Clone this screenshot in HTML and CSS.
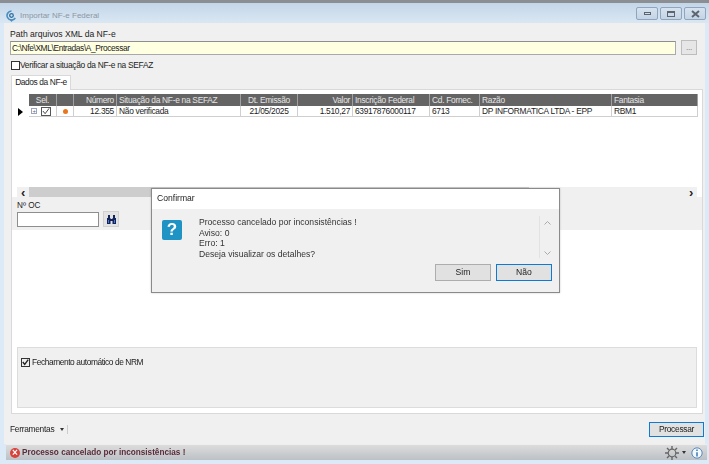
FILE: index.html
```html
<!DOCTYPE html>
<html lang="pt-BR">
<head>
<meta charset="utf-8">
<title>Importar NF-e Federal</title>
<link rel="stylesheet" href="styles.css">
</head>
<body>
<div class="window">
  <header class="titlebar">
    <svg class="app-icon" width="11" height="12" viewBox="0 0 11 12"><path d="M5.500 1a4.500 4.500 0 1 0 3.800 7" fill="none" stroke="#4a8fc0" stroke-width="1.600"/><circle cx="5.500" cy="5.500" r="1.800" fill="none" stroke="#2f6f9f" stroke-width="1.300"/><path d="M5.500 12l2-2.500h-4z" fill="#4a8fc0"/></svg>
    <span class="title">Importar NF-e Federal</span>
    <div class="controls">
      <span class="ctl"><i class="g-min"></i></span>
      <span class="ctl"><i class="g-max"></i></span>
      <span class="ctl"><svg width="9" height="8" viewBox="0 0 9 8"><path d="M1 1l7 6M8 1L1 7" stroke="#5c6470" stroke-width="2"/></svg></span>
    </div>
  </header>
  <main class="client">
    <label class="lbl-path">Path arquivos XML da NF-e</label>
    <div class="path-row">
      <div class="path-input">C:\Nfe\XML\Entradas\A_Processar</div>
      <button class="dots">...</button>
    </div>
    <div class="verify"><span class="cb"></span>Verificar a situação da NF-e na SEFAZ</div>
    <div class="tabs"><span class="tab">Dados da NF-e</span></div>
    <section class="panel">
      <div class="grid-box">
        <div class="grid">
          <div class="corner"></div>
          <div class="th c">Sel.</div><div class="th"></div><div class="th r">Número</div><div class="th">Situação da NF-e na SEFAZ</div><div class="th c">Dt. Emissão</div><div class="th r">Valor</div><div class="th">Inscrição Federal</div><div class="th">Cd. Fornec.</div><div class="th">Razão</div><div class="th">Fantasia</div>
          <div class="ind"><svg width="5" height="8" viewBox="0 0 5 8"><path d="M0 0l5 4-5 4z" fill="#000"/></svg></div>
          <div class="td sel"><span class="plus">+</span><span class="cb2"><svg width="9" height="8" viewBox="0 0 9 8"><path d="M1 4l2.500 3L8 1" fill="none" stroke="#333" stroke-width="1"/></svg></span></div>
          <div class="td c"><span class="dot"></span></div>
          <div class="td r">12.355</div><div class="td">Não verificada</div><div class="td c">21/05/2025</div><div class="td r">1.510,27</div><div class="td">63917876000117</div><div class="td">6713</div><div class="td">DP INFORMATICA LTDA - EPP</div><div class="td">RBM1</div>
        </div>
        <div class="hscroll">
          <span class="arrow">‹</span><span class="thumb"></span><span class="arrow">›</span>
        </div>
      </div>
      <div class="oc">
        <label>Nº OC</label>
        <div class="oc-row">
          <div class="oc-input"></div>
          <button class="bino"><svg width="11" height="11" viewBox="0 0 11 11"><path d="M1 4h3.500v6H1zM6.500 4H10v6H6.500zM2 1h2v3H2zM7 1h2v3H7zM4 5h3v2H4z" fill="#14235c"/><path d="M2 6h1v3H2zM8 6h1v3H8z" fill="#3f7fd0"/></svg></button>
        </div>
      </div>
      <div class="white-area"></div>
      <div class="group"><div class="auto"><span class="cb3"><svg width="9" height="8" viewBox="0 0 9 8"><path d="M1 4l2.500 3L8 1" fill="none" stroke="#222" stroke-width="1.800"/></svg></span>Fechamento automático de NRM</div></div>
    </section>
    <div class="tools">
      <span class="ferr">Ferramentas</span><span class="caret"></span><span class="sep"></span>
      <button class="proc">Processar</button>
    </div>
  </main>
  <footer class="status">
    <span class="err">×</span>
    <span class="msg">Processo cancelado por inconsistências !</span>
    <svg class="gear" width="14" height="14" viewBox="0 0 14 14"><circle cx="7" cy="7" r="3.800" fill="none" stroke="#666" stroke-width="1.200"/><path d="M7 0v3M7 11v3M0 7h3M11 7h3M2 2l2 2M10 10l2 2M12 2l-2 2M4 10l-2 2" stroke="#666" stroke-width="1.400"/></svg>
    <span class="caret dark"></span>
    <svg class="info" width="12" height="12" viewBox="0 0 14 14"><circle cx="7" cy="7" r="6" fill="#f4f8fc" stroke="#3a78b8"/><path d="M7 6v5M7 3v1.600" stroke="#2c6cb0" stroke-width="1.600"/></svg>
  </footer>
</div>
<div class="dialog">
  <div class="d-title">Confirmar</div>
  <div class="d-body">
    <div class="d-content">
      <span class="qmark">?</span>
      <div class="d-text">Processo cancelado por inconsistências !<br>Aviso: 0<br>Erro: 1<br>Deseja visualizar os detalhes?</div>
      <div class="d-scroll"><svg width="7" height="4" viewBox="0 0 7 4"><path d="M.5 3.500l3-3 3 3" fill="none" stroke="#aaa"/></svg><svg width="7" height="4" viewBox="0 0 7 4"><path d="M.5.500l3 3 3-3" fill="none" stroke="#aaa"/></svg></div>
    </div>
    <div class="d-btns"><button class="btn">Sim</button><button class="btn def">Não</button></div>
  </div>
</div>
</body>
</html>
```
FILE: styles.css
```css
* { box-sizing: border-box; }
html, body { margin: 0; height: 464px; width: 709px; overflow: hidden; }
body { position: relative; font: 8.4px/11px "Liberation Sans", Arial, sans-serif; letter-spacing: -.29px; color: #1c1c1c; background: #dce9f6; }
button { font: inherit; letter-spacing: inherit; color: inherit; padding: 0; }
.window { height: 464px; display: flex; flex-direction: column; border-top: 3px solid #8b8f94; filter: blur(.35px); }
.titlebar { height: 20px; flex: none; display: flex; align-items: center; padding: 5px 3px 0 6px; background: linear-gradient(#c3d6e8, #dae7f3); }
.app-icon { flex: none; }
.title { margin-left: 3px; color: #8b97a3; font-size: 8px; letter-spacing: 0; }
.controls { margin-left: auto; display: flex; gap: 2px; margin-top: -4px; }
.ctl { width: 22px; height: 13px; border: 1px solid #8fa4bd; border-radius: 2px; background: linear-gradient(#d6e2ef, #c4d4e5); display: flex; align-items: center; justify-content: center; }
.g-min { width: 7px; height: 3px; border: 1px solid #5c6470; }
.g-max { width: 8px; height: 6px; border: 1px solid #5c6470; border-top-width: 2px; }
.client { flex: 1; margin: 0 4px; background: #f0f0f0; padding: 6px 0 0 6px; display: flex; flex-direction: column; min-height: 0; }
.lbl-path { display: block; height: 11px; font-size: 8.6px; letter-spacing: 0; }
.path-row { display: flex; align-items: center; gap: 5px; height: 15px; padding-right: 8px; }
.path-input { flex: 1; height: 14px; border: 1px solid #a9a9a9; border-top-color: #8e8e8e; background: #ffffe1; line-height: 12px; padding-left: 1px; letter-spacing: -.38px; }
.dots { width: 16px; height: 15px; background: #e6e6e6; border: 1px solid #bdbdbd; color: #888; line-height: 9px; }
.verify { display: flex; align-items: center; margin: 5px 0 0 1px; height: 10px; }
.cb { width: 9px; height: 9px; border: 1px solid #333; background: #fff; margin-right: 0; }
.tabs { margin-top: 5px; height: 15px; display: flex; position: relative; z-index: 1; padding-left: 1px; }
.tab { width: 60px; height: 15px; background: #fff; border: 1px solid #d9d9d9; border-bottom: 0; text-align: center; line-height: 13px; letter-spacing: -.4px; }
.panel { width: 692px; margin-left: 1px; height: 325px; margin-top: -1px; background: #fff; border: 1px solid #d9d9d9; padding: 4px 5px 0; display: flex; flex-direction: column; flex: none; }
.grid-box { height: 103px; flex: none; display: flex; flex-direction: column; background: #f7f7f7; }
.grid { display: grid; grid-template-columns: 12px 28px 17px 43px 124px 57px 55px 77px 50px 132px 86px; grid-template-rows: 12px 11px; background: #fff; flex: 1; align-content: start; }
.corner { background: #fff; }
.th { background: #646464; color: #e4e4e4; padding: 0 2px; border-right: 1px solid #a0a0a0; white-space: nowrap; height: 12px; line-height: 12px; }
.td { height: 11px; background: #fff; padding: 0 2px; border-right: 1px solid #cfcfcf; border-bottom: 1px solid #cfcfcf; white-space: nowrap; line-height: 10px; }
.c { text-align: center; }
.r { text-align: right; }
.ind { display: flex; align-items: center; padding-left: 1px; background: #fff; }
.sel { display: flex; align-items: center; gap: 4px; padding: 0 0 0 2px; }
.plus { width: 6px; height: 6px; border: 1px solid #9aa4c2; font-size: 6px; line-height: 4px; text-align: center; color: #667; }
.cb2 { width: 10px; height: 9px; border: 1px solid #555; display: flex; align-items: center; justify-content: center; }
.dot { display: inline-block; width: 5px; height: 5px; border-radius: 50%; background: #e8761e; margin-top: 2px; }
.hscroll { height: 10px; flex: none; display: flex; align-items: center; background: #f0f0f0; font-size: 13px; color: #222; }
.arrow { width: 12px; flex: none; text-align: center; font-weight: 700; line-height: 9px; }
.thumb { width: 500px; height: 10px; background: #cdcdcd; margin-right: auto; }
.oc { height: 33px; flex: none; background: #f0f0f0; margin: 0 -5px 0 -5px; padding: 3px 5px 0; }
.oc label { display: block; height: 11px; font-size: 8.2px; letter-spacing: 0; }
.oc-row { display: flex; gap: 4px; align-items: center; }
.oc-input { width: 82px; height: 15px; background: #fff; border: 1px solid #8e8e8e; }
.bino { width: 16px; height: 16px; background: #e3e3e3; border: 1px solid #d0d0d0; display: flex; align-items: center; justify-content: center; }
.white-area { height: 117px; flex: none; }
.group { height: 61px; flex: none; background: #f0f0f0; border: 1px solid #dcdcdc; padding: 9px 3px; }
.auto { display: flex; align-items: center; height: 10px; letter-spacing: -.42px; }
.cb3 { width: 9px; height: 9px; border: 1px solid #333; background: #eee; margin-right: 2px; display: flex; align-items: center; justify-content: center; }
.tools { display: flex; align-items: center; height: 30px; padding: 0 1px 0 0; }
.caret { width: 0; height: 0; border: 2px solid transparent; border-top: 3px solid #333; border-bottom: 0; margin-left: 6px; margin-top: 1px; }
.sep { width: 1px; height: 9px; background: #ccc; margin-left: 3px; }
.proc { margin-left: auto; width: 55px; height: 15px; background: #e1e1e1; border: 1px solid #0d7ad6; }
.status { height: 16px; flex: none; margin: 0 2px 4px 6px; display: flex; align-items: center; padding: 0 4px; background: linear-gradient(#dcdcdc, #bcc1c6); border-top: 1px solid #eee; }
.err { width: 10px; height: 10px; border-radius: 50%; background: #d8423a; color: #fff; font: 700 10px/10px "Liberation Sans", sans-serif; letter-spacing: 0; text-align: center; margin-right: 2px; }
.msg { font-weight: 700; font-size: 8.2px; letter-spacing: 0; color: #5a2d3a; }
.gear { margin-left: auto; }
.caret.dark { margin: 0 5px 0 3px; }
.dialog { position: absolute; left: 151px; top: 188px; width: 409px; height: 105px; background: #f0f0f0; border: 1px solid #8a8a8a; box-shadow: 0 0 2px rgba(0,0,0,.2); filter: blur(.3px); display: flex; flex-direction: column; font-size: 8.6px; letter-spacing: 0; }
.d-title { height: 20px; flex: none; background: #fff; padding: 4px 0 0 5px; }
.d-body { flex: 1; display: flex; flex-direction: column; }
.d-content { display: flex; height: 50px; padding-top: 8px; }
.qmark { width: 20px; height: 20px; background: #1f93c4; color: #fff; font: 700 17px/20px "Liberation Sans", sans-serif; text-align: center; border-radius: 2px; margin: 3px 0 0 10px; flex: none; }
.d-text { margin-left: 17px; line-height: 10.5px; width: 340px; color: #333; }
.d-scroll { width: 15px; height: 42px; margin-top: -1px; border-left: 1px solid #e2e2e2; display: flex; flex-direction: column; justify-content: space-between; align-items: center; padding: 5px 0 3px; }
.d-btns { display: flex; justify-content: flex-end; gap: 5px; padding: 5px 7px 0 0; }
.btn { width: 56px; height: 17px; background: #e1e1e1; border: 1px solid #adadad; }
.btn.def { border: 1px solid #0d7ad6; }
```
